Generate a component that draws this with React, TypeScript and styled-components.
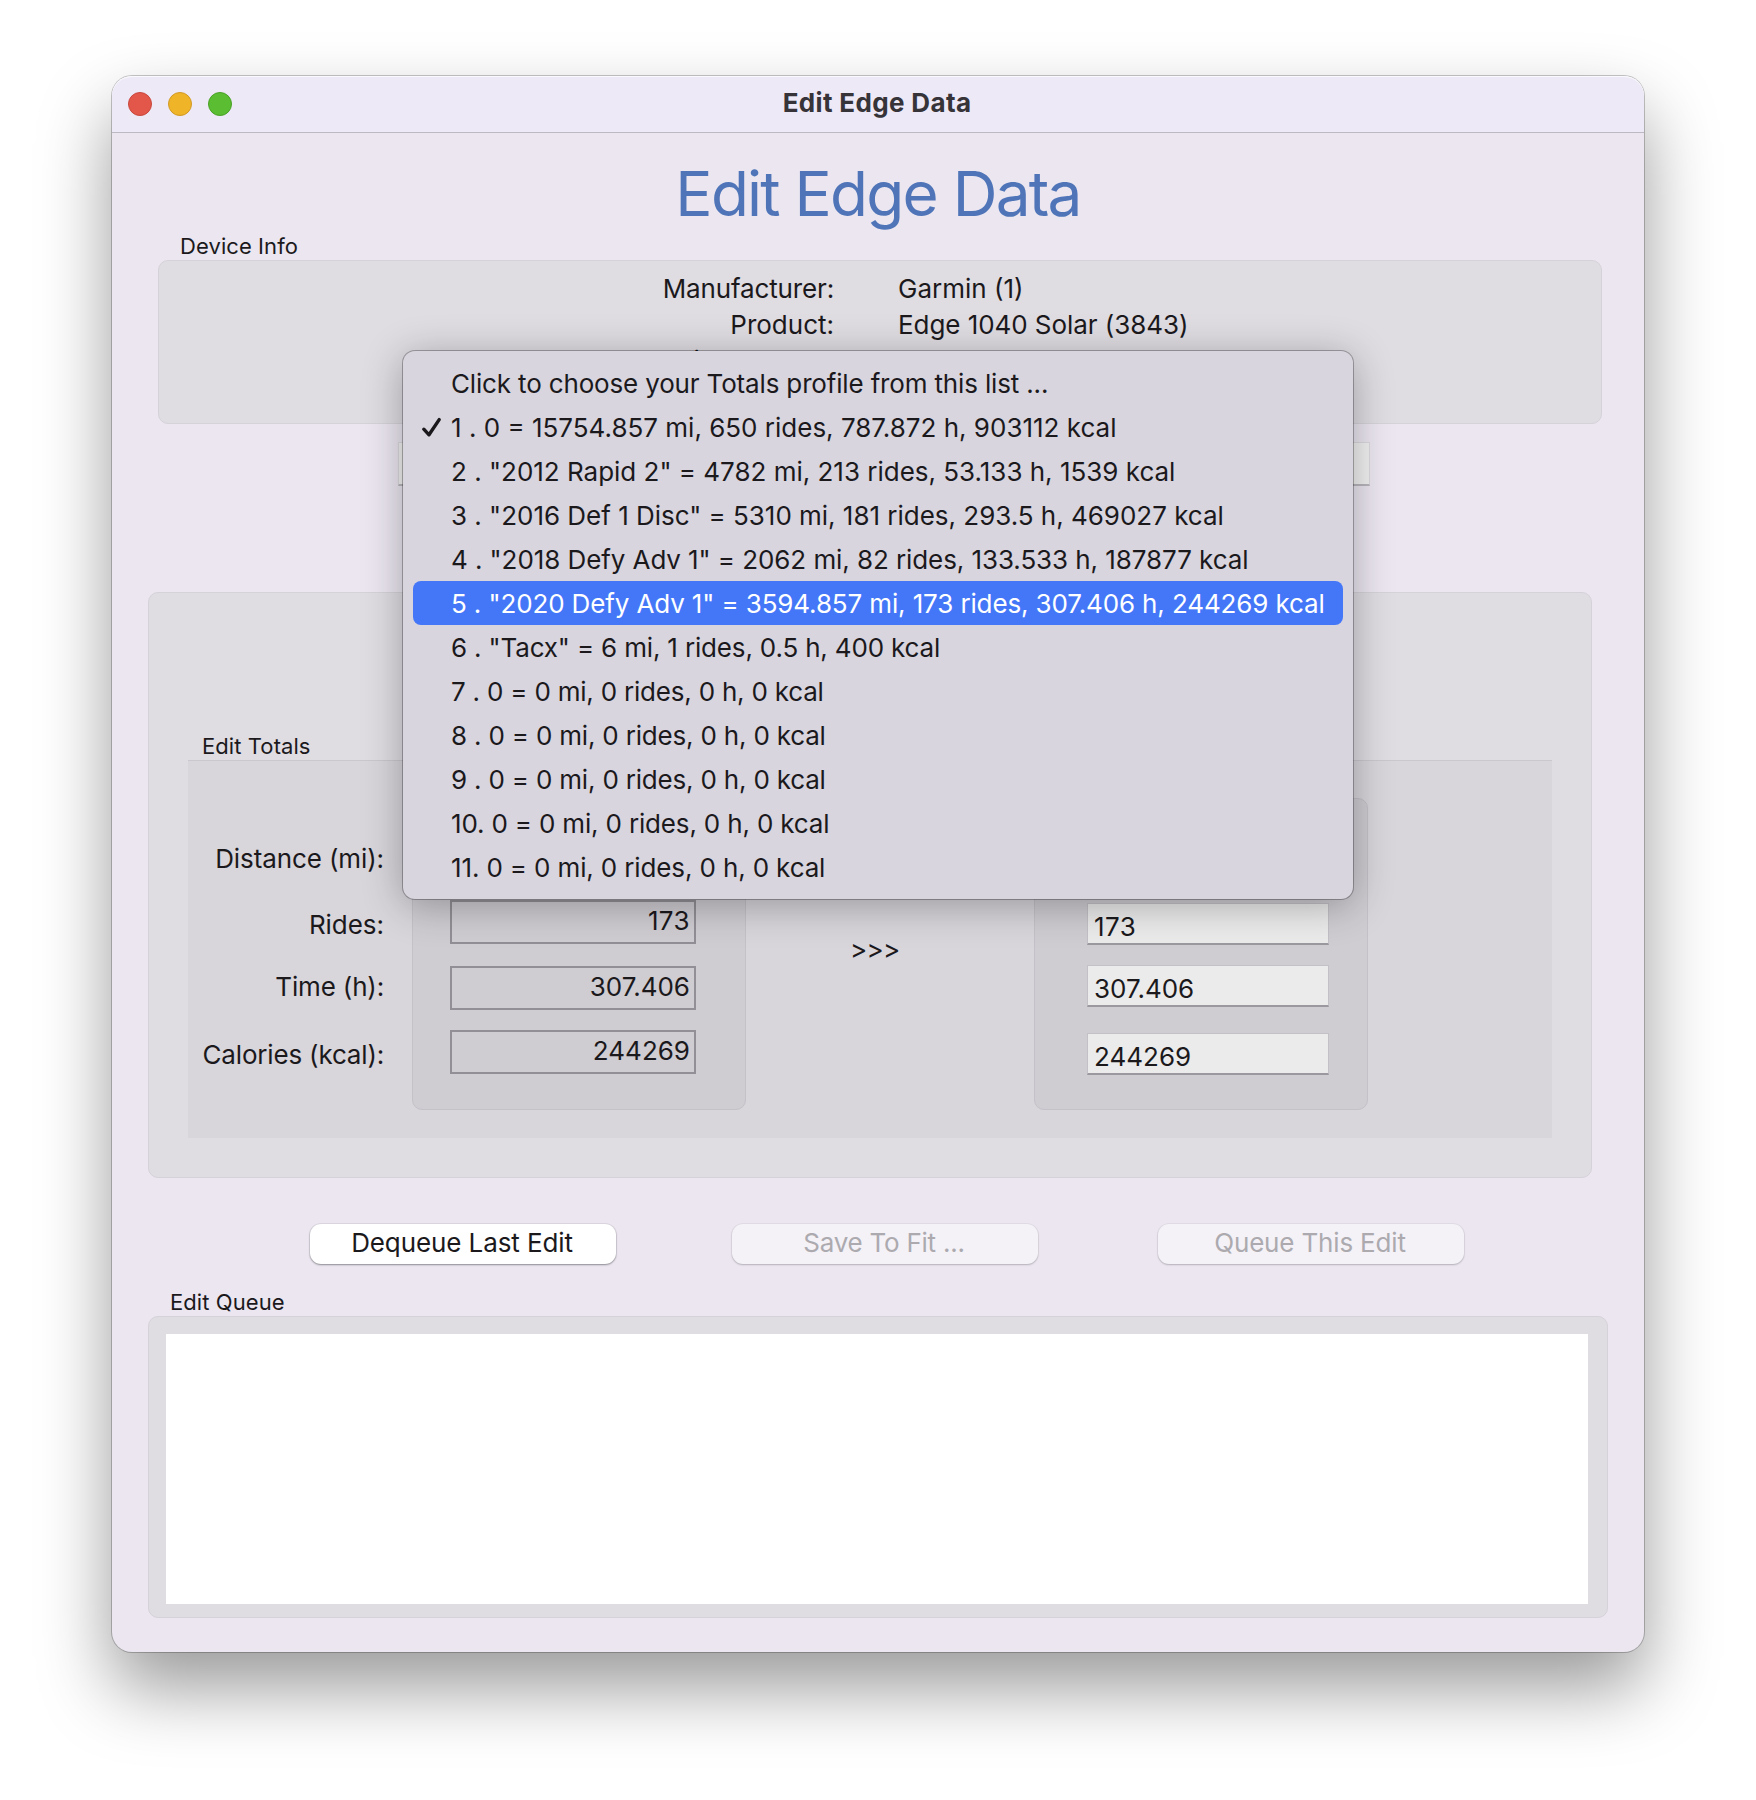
import React from "react";
import styled, { createGlobalStyle } from "styled-components";

const GlobalStyle = createGlobalStyle`
  *, *::before, *::after { box-sizing: border-box; }
  body {
    margin: 0;
    background: #fff;
    font-family: Inter, "Liberation Sans", sans-serif;
    font-size: 26px;
    font-weight: 430;
    color: #1b191c;
  }
`;

const Desktop = styled.div`
  display: flex;
  justify-content: center;
  height: 1800px;
  padding-top: 76px;
  overflow: hidden;
`;

const Window = styled.main`
  position: relative;
  display: flex;
  flex-direction: column;
  width: 1532px;
  height: 1576px;
  border-radius: 20px;
  background: #ebe6f0;
  box-shadow: 0 0 0 1px rgba(0, 0, 0, 0.22), 0 36px 72px rgba(0, 0, 0, 0.4);
`;

const TitleBar = styled.header`
  display: grid;
  grid-template-columns: 1fr auto 1fr;
  align-items: center;
  height: 57px;
  padding: 0 18px 0 16px;
  border-bottom: 1px solid #bdb9c2;
  border-radius: 20px 20px 0 0;
  background: #ede9f7;
  box-shadow: inset 0 1px 0 #faf9fd;
`;

const Lights = styled.div`
  display: flex;
  gap: 16px;
`;

const Light = styled.span<{ $fill: string; $edge: string }>`
  width: 24px;
  height: 24px;
  border-radius: 50%;
  border: 1px solid ${(p) => p.$edge};
  background: ${(p) => p.$fill};
`;

const WindowTitle = styled.div`
  padding-bottom: 3px;
  font-weight: 700;
  letter-spacing: 0.35px;
  color: #363438;
`;

const Content = styled.div`
  display: flex;
  flex-direction: column;
  padding: 22px 36px 0;
`;

const Heading = styled.h1`
  margin: 0;
  font-size: 62px;
  font-weight: 440;
  line-height: 78px;
  letter-spacing: -1.75px;
  text-align: center;
  color: #4f75b8;
`;

const Caption = styled.div<{ $indent: number }>`
  height: 27px;
  padding-left: ${(p) => p.$indent}px;
  font-size: 22px;
  line-height: 26px;
  letter-spacing: 0.08px;
`;

const Group = styled.section`
  border: 1px solid #d6d2da;
  border-radius: 10px;
  background: #dfdce2;
`;

const DeviceSection = styled.div`
  padding: 0 6px 0 10px;
`;

const DeviceGroup = styled(Group)`
  display: grid;
  grid-template-columns: 675px 1fr;
  grid-auto-rows: 36px;
  column-gap: 64px;
  height: 164px;
  padding-top: 10px;
  line-height: 36px;
`;

const DeviceLabel = styled.div<{ $track?: number }>`
  letter-spacing: ${(p) => p.$track ?? 0}px;
  text-align: right;
`;

const DeviceValue = styled.div<{ $track?: number }>`
  letter-spacing: ${(p) => p.$track ?? 0}px;
`;

const inputSkin = `
  border: 1px solid #c3c0c7;
  border-bottom: 2px solid #9b999f;
  background: #ebebeb;
`;

const ProfileSelect = styled.div`
  ${inputSkin}
  border-color: #dcd9df;
  border-bottom-color: #b9b7bd;
  background: #f1f1f1;
  width: 972px;
  height: 44px;
  margin: 18px 0 0 250px;
`;

const TotalsGroup = styled(Group)`
  width: 1444px;
  height: 586px;
  margin-top: 106px;
  padding: 140px 39px 0;
`;

const TotalsPanel = styled.div`
  display: flex;
  align-items: flex-start;
  height: 378px;
  border-top: 1px solid #cac7ce;
  background: #d8d5db;
`;

const LabelColumn = styled.div`
  display: flex;
  flex-direction: column;
  width: 224px;
  padding: 83px 28px 0 0;
  line-height: 30px;
  text-align: right;
`;

const RowLabel = styled.div<{ $h: number; $track: number }>`
  height: ${(p) => p.$h}px;
  letter-spacing: ${(p) => p.$track}px;
  white-space: nowrap;
`;

const ValueBox = styled.div`
  display: flex;
  flex-direction: column;
  flex: none;
  width: 334px;
  height: 312px;
  margin-top: 37px;
  border: 1px solid #c4c1c8;
  border-radius: 10px;
  background: #cfccd2;
`;

const CurrentBox = styled(ValueBox)`
  padding: 35px 0 0 37px;
`;

const NewBox = styled(ValueBox)`
  padding: 41px 0 0 52px;
`;

const Readout = styled.output<{ $after: number; $track: number }>`
  display: block;
  width: 246px;
  height: 44px;
  margin-bottom: ${(p) => p.$after}px;
  padding-right: 4px;
  border: 2px solid #929096;
  line-height: 37px;
  letter-spacing: ${(p) => p.$track}px;
  text-align: right;
`;

const Entry = styled.div<{ $after: number; $track: number }>`
  ${inputSkin}
  width: 242px;
  height: 42px;
  margin-bottom: ${(p) => p.$after}px;
  padding-left: 6px;
  line-height: 46px;
  letter-spacing: ${(p) => p.$track}px;
`;

const Arrows = styled.div`
  width: 288px;
  padding: 174px 0 0 104px;
  line-height: 30px;
  letter-spacing: -0.7px;
`;

const ButtonRow = styled.div`
  display: flex;
  padding: 46px 0 25px 162px;
`;

const PushButton = styled.button<{ $track: number; $gap?: number }>`
  width: 306px;
  height: 40px;
  margin-left: ${(p) => p.$gap ?? 0}px;
  padding: 0 2px 4px 0;
  border: 0;
  border-radius: 11px;
  background: #fff;
  box-shadow: 0 0 0 1px rgba(0, 0, 0, 0.06), 0 1px 2px rgba(0, 0, 0, 0.35);
  font: inherit;
  color: inherit;
  letter-spacing: ${(p) => p.$track}px;

  &:disabled {
    background: #f4f2f7;
    box-shadow: 0 0 0 1px rgba(0, 0, 0, 0.04), 0 1px 2px rgba(0, 0, 0, 0.2);
    color: #acaaaf;
  }
`;

const QueueGroup = styled(Group)`
  height: 302px;
  padding: 17px 19px 13px 17px;
`;

const QueueList = styled.div`
  height: 270px;
  background: #fff;
`;

const Menu = styled.ul`
  position: absolute;
  top: 275px;
  left: 291px;
  width: 950px;
  height: 548px;
  margin: 0;
  padding: 10px;
  list-style: none;
  border-radius: 12px;
  background: #d8d5df;
  box-shadow: 0 0 0 1px rgba(0, 0, 0, 0.28), 0 6px 40px rgba(0, 0, 0, 0.3);
`;

const MenuItem = styled.li<{ $active: boolean; $track: number }>`
  display: grid;
  grid-template-columns: 30px 1fr;
  align-items: center;
  height: 44px;
  padding: 2px 0 0 8px;
  border-radius: 8px;
  line-height: 42px;
  letter-spacing: ${(p) => p.$track}px;
  white-space: pre;
  background: ${(p) => (p.$active ? "#4377f8" : "transparent")};
  color: ${(p) => (p.$active ? "#fff" : "inherit")};
`;

const Check = styled.svg`
  display: block;
  width: 22px;
  height: 22px;
`;

const profiles: { text: string; track: number; checked?: boolean; active?: boolean }[] = [
  { text: "Click to choose your Totals profile from this list ...", track: -0.16 },
  { text: "1 . 0 = 15754.857 mi, 650 rides, 787.872 h, 903112 kcal", track: 0, checked: true },
  { text: '2 . "2012 Rapid 2" = 4782 mi, 213 rides, 53.133 h, 1539 kcal', track: -0.01 },
  { text: '3 . "2016 Def 1 Disc" = 5310 mi, 181 rides, 293.5 h, 469027 kcal', track: -0.02 },
  { text: '4 . "2018 Defy Adv 1" = 2062 mi, 82 rides, 133.533 h, 187877 kcal', track: -0.08 },
  { text: '5 . "2020 Defy Adv 1" = 3594.857 mi, 173 rides, 307.406 h, 244269 kcal', track: -0.127, active: true },
  { text: '6 . "Tacx" = 6 mi, 1 rides, 0.5 h, 400 kcal', track: -0.167 },
  { text: "7 . 0 = 0 mi, 0 rides, 0 h, 0 kcal", track: -0.21 },
  { text: "8 . 0 = 0 mi, 0 rides, 0 h, 0 kcal", track: -0.19 },
  { text: "9 . 0 = 0 mi, 0 rides, 0 h, 0 kcal", track: -0.19 },
  { text: "10. 0 = 0 mi, 0 rides, 0 h, 0 kcal", track: -0.17 },
  { text: "11. 0 = 0 mi, 0 rides, 0 h, 0 kcal", track: -0.136 },
];

const labels = [
  { text: "Distance (mi):", h: 66, track: -0.1 },
  { text: "Rides:", h: 62, track: -0.04 },
  { text: "Time (h):", h: 68, track: -0.16 },
  { text: "Calories (kcal):", h: 30, track: -0.18 },
];

const totals = [
  { id: "distance", text: "", track: 0, currentAfter: 22, newAfter: 21 },
  { id: "rides", text: "173", track: 0.4, currentAfter: 22, newAfter: 20 },
  { id: "time", text: "307.406", track: 0, currentAfter: 20, newAfter: 26 },
  { id: "calories", text: "244269", track: 0, currentAfter: 0, newAfter: 0 },
];

export default function App() {
  return (
    <>
      <GlobalStyle />
      <Desktop>
        <Window>
          <TitleBar>
            <Lights>
              <Light $fill="#e2574a" $edge="#c9473c" />
              <Light $fill="#f0b429" $edge="#d29a24" />
              <Light $fill="#5bbd31" $edge="#4aa127" />
            </Lights>
            <WindowTitle>Edit Edge Data</WindowTitle>
          </TitleBar>
          <Content>
            <Heading>Edit Edge Data</Heading>
            <DeviceSection>
              <Caption $indent={22}>Device Info</Caption>
              <DeviceGroup>
                <DeviceLabel $track={-0.15}>Manufacturer:</DeviceLabel>
                <DeviceValue $track={0}>Garmin (1)</DeviceValue>
                <DeviceLabel>Product:</DeviceLabel>
                <DeviceValue $track={-0.06}>Edge 1040 Solar (3843)</DeviceValue>
                <DeviceLabel>Serial Number:</DeviceLabel>
              </DeviceGroup>
            </DeviceSection>
            <ProfileSelect />
            <TotalsGroup>
              <Caption $indent={14}>Edit Totals</Caption>
              <TotalsPanel>
                <LabelColumn>
                  {labels.map((l) => (
                    <RowLabel key={l.text} $h={l.h} $track={l.track}>
                      {l.text}
                    </RowLabel>
                  ))}
                </LabelColumn>
                <CurrentBox>
                  {totals.map((t) => (
                    <Readout key={t.id} $after={t.currentAfter} $track={t.track}>
                      {t.text}
                    </Readout>
                  ))}
                </CurrentBox>
                <Arrows>&gt;&gt;&gt;</Arrows>
                <NewBox>
                  {totals.map((t) => (
                    <Entry key={t.id} $after={t.newAfter} $track={t.track}>
                      {t.text}
                    </Entry>
                  ))}
                </NewBox>
              </TotalsPanel>
            </TotalsGroup>
            <ButtonRow>
              <PushButton $track={-0.1}>Dequeue Last Edit</PushButton>
              <PushButton $track={-0.25} $gap={116} disabled>
                Save To Fit ...
              </PushButton>
              <PushButton $track={-0.17} $gap={120} disabled>
                Queue This Edit
              </PushButton>
            </ButtonRow>
            <Caption $indent={22}>Edit Queue</Caption>
            <QueueGroup>
              <QueueList />
            </QueueGroup>
          </Content>
          <Menu>
            {profiles.map((p) => (
              <MenuItem key={p.text} $active={!!p.active} $track={p.track}>
                <span>
                  {p.checked && (
                    <Check viewBox="0 0 22 22">
                      <path
                        d="M2.8 12.2 L8 17.8 L18.2 2.6"
                        fill="none"
                        stroke="#1b191c"
                        strokeWidth="3.4"
                        strokeLinecap="round"
                        strokeLinejoin="round"
                      />
                    </Check>
                  )}
                </span>
                <span>{p.text}</span>
              </MenuItem>
            ))}
          </Menu>
        </Window>
      </Desktop>
    </>
  );
}
